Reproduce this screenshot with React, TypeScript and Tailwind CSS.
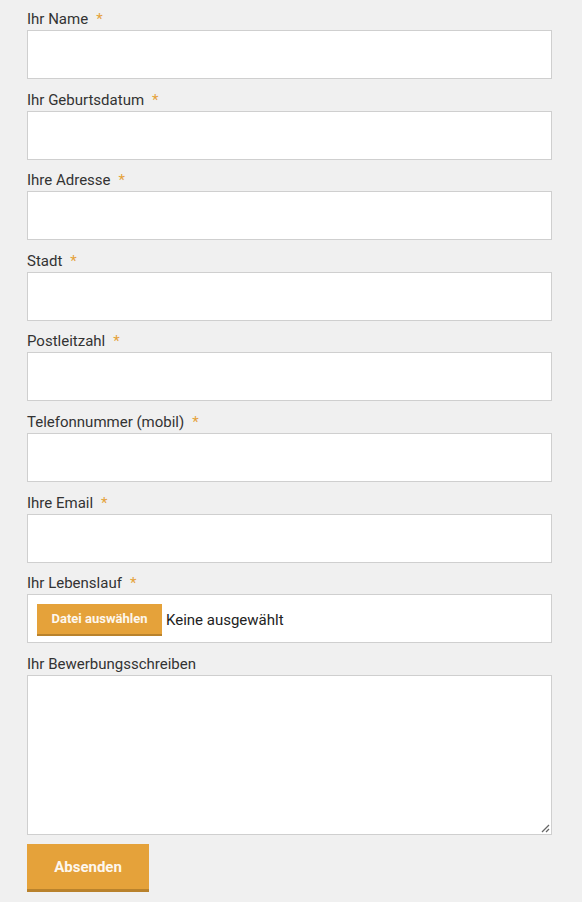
import React from "react";

const fields = [
  "Ihr Name",
  "Ihr Geburtsdatum",
  "Ihre Adresse",
  "Stadt",
  "Postleitzahl",
  "Telefonnummer (mobil)",
  "Ihre Email",
];

function Label({ text, req }: { text: string; req?: boolean }) {
  return (
    <div className="h-[21px] pt-[1px] mb-[1px] text-[15px] leading-[20px] text-[#333333]">
      {text}
      {req && <span className="ml-[8px] text-[#e5a23a]">*</span>}
    </div>
  );
}

export default function App() {
  return (
    <div
      className="min-h-[902px] w-[582px] bg-[#f0f0f0] pl-[27px] pr-[30px] pt-[8px]"
      style={{ fontFamily: "Roboto, 'Liberation Sans', sans-serif" }}
    >
      {fields.map((f) => (
        <div key={f} className="mb-[9.6px]">
          <Label text={f} req />
          <div className="h-[49px] w-[525px] border border-[#cfcfcf] bg-white" />
        </div>
      ))}
      <div className="mb-[9.6px]">
        <Label text="Ihr Lebenslauf" req />
        <div className="flex h-[49px] w-[525px] items-center border border-[#cfcfcf] bg-white pl-[9px] pt-[3px]">
          <div className="flex h-[32px] w-[125px] items-center justify-center border-b-[2px] border-[#b9822c] bg-[#e5a23a] text-[13px] font-bold text-[#fdf7ee]">
            Datei auswählen
          </div>
          <span className="ml-[4px] text-[15px] text-[#222222]">Keine ausgewählt</span>
        </div>
      </div>
      <div className="mb-[9px]">
        <Label text="Ihr Bewerbungsschreiben" />
        <div className="relative h-[160px] w-[525px] border border-[#cfcfcf] bg-white">
          <svg className="absolute bottom-[1px] right-[1px]" width="9" height="9" viewBox="0 0 9 9">
            <line x1="8" y1="1" x2="1" y2="8" stroke="#666" strokeWidth="1.2" />
            <line x1="8" y1="5" x2="5" y2="8" stroke="#666" strokeWidth="1.2" />
          </svg>
        </div>
      </div>
      <div className="flex h-[48px] w-[122px] items-center justify-center border-b-[3px] border-[#b9822c] bg-[#e5a23a] pt-[2px] text-[15px] font-bold text-[#fdf7ee]">
        Absenden
      </div>
    </div>
  );
}
